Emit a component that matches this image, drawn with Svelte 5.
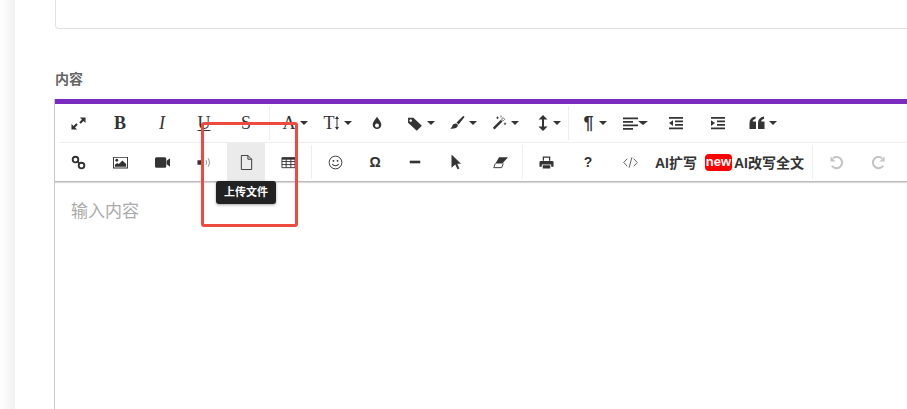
<script>
  const ic = {
    expand: '<path d="M9.500 1.500H15.500V7.500L13.300 5.300 10.400 8.200 8.800 6.600 11.700 3.700zM6.500 14.500H.5V8.500L2.700 10.700 5.600 7.800 7.200 9.400 4.300 12.300z"/>',
    link: '<g fill="none" stroke="currentColor" stroke-width="2"><circle cx="4.800" cy="4.800" r="3"/><circle cx="11.200" cy="11.200" r="3"/><path d="M7 7l2 2"/></g>',
    image: '<path fill-rule="evenodd" d="M0 2h16v12.400H0zM1 3v10.400h14V3z"/><circle cx="4" cy="5.600" r="1.500"/><path d="M2 12.400V10.500l2.500-2 1.700 1.200L10 5.800l4 3.800v2.800z"/>',
    video: '<path d="M1.600 2.500h8.800a1.600 1.600 0 0 1 1.600 1.600v7.800a1.600 1.600 0 0 1-1.600 1.600H1.600A1.600 1.600 0 0 1 0 11.900V4.100a1.600 1.600 0 0 1 1.600-1.600zM12.500 6.200 16 3.500v9l-3.500-2.700z"/>',
    sound: '<path d="M.5 5.500h3.500l3-1.500v8l-3-1.500H.5z"/><path fill="none" stroke="#777" stroke-width=".9" d="M9.500 5.500c1 1.400 1 3.600 0 5M11.800 3.500c1.900 2.500 1.900 6.500 0 9"/>',
    file: '<path fill="none" stroke="currentColor" stroke-width="1" d="M2.500.5h7l4 4v11h-11zM9.500.5v4h4"/>',
    table: '<path fill="none" stroke="currentColor" stroke-width="1" d="M1 3h14v10.500H1zM1 7h14M1 10.200h14M5.500 3v10.500M10.500 3v10.500"/><path d="M1 2.500h14V5H1z"/>',
    smile: '<circle cx="8" cy="8" r="6.800" fill="none" stroke="currentColor" stroke-width="1"/><circle cx="5.800" cy="6.200" r="1"/><circle cx="10.200" cy="6.200" r="1"/><path fill="none" stroke="currentColor" stroke-width="1.100" d="M4.600 9.600c1.600 2.600 5.200 2.600 6.800 0"/>',
    minus: '<rect x="2" y="6.500" width="12" height="3"/>',
    cursor: '<path d="M3.500.5 13 9.800H9.200l2.200 4.600-1.900.9-2.200-4.800-3.800 3.200z"/>',
    eraser: '<path d="M6.500 2.500H16L10 9H2.600z"/><path fill="none" stroke="currentColor" stroke-width="1" d="M2.500 9 .8 13.500h8.400L11 9"/>',
    print: '<path d="M4 1.500h8V6h-1.300V3H5.300v3H4zM1.800 6.500h12.400A1.300 1.300 0 0 1 15.500 7.800v4.700H13V10H3v2.500H.5V7.800A1.300 1.300 0 0 1 1.800 6.500zM4 11h8v3.500H4z"/>',
    code: '<path fill="none" stroke="#555" stroke-width="1" d="M4.500 4 .8 8l3.700 4M11.500 4l3.700 4-3.700 4M9.500 2.500l-3 11"/>',
    undo: '<path fill="none" stroke="currentColor" stroke-width="2.200" d="M4.200 3.400A6 6 0 1 1 3 11.500"/><path d="M1.500 1.500 7 7H1.500z"/>',
    redo: '<path fill="none" stroke="currentColor" stroke-width="2.200" d="M11.800 3.400A6 6 0 1 0 13 11.500"/><path d="M14.500 1.500 9 7h5.500z"/>',
    tag: '<path d="M1 2.500h5l8 7.500-4.800 4.800L1 7.200zM3.500 4a1.200 1.200 0 1 0 .01 0z" fill-rule="evenodd"/>',
    brush: '<path d="M15 1c.6.5.4 1.300-.2 2.100L9.600 9.400 7.500 7.500l5.900-5.800C14 1.100 14.600.7 15 1zM6.800 8.500c1.300 0 2.300 1 2 2.300-.4 2-2.600 3-6.300 3-.9 0-1.200-.6-.6-.9 1-.6 1.100-1.100 1.300-2 .3-1.300 1.800-2.400 3.600-2.400z"/>',
    wand: '<path d="m1.800 12.800 8-8 1.700 1.700-8 8z"/><path d="M10.500 4.100 12 2.600l1.700 1.700-1.500 1.500z" fill="#fff" stroke="currentColor" stroke-width=".7"/><path fill="none" stroke="currentColor" stroke-width=".8" d="M6.500 1.500v2.600M5.200 2.800h2.600M14 7.500v2.500M12.800 8.800h2.500M10 .5v1.800"/>',
    drop: '<path d="M8 1.500c.8 2.300 4.300 5 4.300 8.200a4.300 4.300 0 0 1-8.600 0C3.700 6.500 7.200 3.800 8 1.500z"/><path fill="#fff" d="M8 8.500a2 2 0 0 1 2 2 2 2 0 0 1-4 0 2 2 0 0 1 2-2z"/>',
    height: '<path d="M8 0 12.500 4.500H9v7h3.500L8 16l-4.500-4.500H7v-7H3.500z"/>',
    align: '<path d="M0 2.500h15v1.800H0zM0 6h10v1.800H0zM0 9.500h15v1.800H0zM0 13h10v1.800H0z"/>',
    outdent: '<path d="M1 2h14v1.700H1zM7 5.500h8v1.700H7zM7 9h8v1.700H7zM1 12.500h14v1.700H1zM5 5.200v5.800L1 8.100z"/>',
    indent: '<path d="M1 2h14v1.700H1zM7 5.500h8v1.700H7zM7 9h8v1.700H7zM1 12.500h14v1.700H1zM1 5.200v5.800L5 8.100z"/>',
    quote: '<path d="M.5 8c0-3.500 2-5.800 6-6.500v2.400C4.700 4.300 3.800 5 3.700 6.500h3.300v7.500H.5zM9 8c0-3.500 2-5.800 6-6.500v2.400c-1.800.4-2.700 1.100-2.800 2.600h3.300v7.500H9z"/>'
  };

  const row1 = [
    { x: 59, w: 38, icon: 'expand', s: 15 },
    { x: 101, w: 38, text: 'B', cls: 'b' },
    { x: 143, w: 38, text: 'I', cls: 'i' },
    { x: 185, w: 38, text: 'U', cls: 'u' },
    { x: 227, w: 38, text: 'S', cls: 's' },
    { x: 269, sep: true },
    { x: 283, w: 12, text: 'A', cls: 'a', caret: true },
    { x: 323, w: 16, text: 'T', cls: 't', caret: true, arrow: true },
    { x: 358, w: 38, icon: 'drop', s: 16 },
    { x: 408, w: 14, icon: 'tag', s: 17, caret: true },
    { x: 450, w: 14, icon: 'brush', s: 16, caret: true },
    { x: 492, w: 14, icon: 'wand', s: 16, caret: true },
    { x: 537, w: 11, icon: 'height', s: 16, caret: true },
    { x: 568, sep: true },
    { x: 583, w: 11, text: '¶', cls: 'p', caret: true },
    { x: 623, w: 15, icon: 'align', s: 16, caret: 'tight' },
    { x: 657, w: 38, icon: 'outdent', s: 16 },
    { x: 699, w: 38, icon: 'indent', s: 16 },
    { x: 749, w: 15, icon: 'quote', s: 16, caret: true }
  ];
  const row2 = [
    { x: 59, w: 38, icon: 'link', s: 15 },
    { x: 101, w: 38, icon: 'image', s: 15 },
    { x: 143, w: 38, icon: 'video', s: 15 },
    { x: 185, w: 38, icon: 'sound', s: 15 },
    { x: 227, w: 38, icon: 'file', s: 15, active: true },
    { x: 269, w: 38, icon: 'table', s: 15 },
    { x: 311, sep: true },
    { x: 316, w: 38, icon: 'smile', s: 15 },
    { x: 356, w: 38, text: 'Ω', cls: 'o' },
    { x: 396, w: 38, icon: 'minus', s: 14 },
    { x: 437, w: 38, icon: 'cursor', s: 16 },
    { x: 481, w: 38, icon: 'eraser', s: 15 },
    { x: 522, sep: true },
    { x: 527, w: 38, icon: 'print', s: 15 },
    { x: 569, w: 38, text: '?', cls: 'q' },
    { x: 611, w: 38, icon: 'code', s: 15 },
    { x: 655, w: 42, text: 'AI扩写', cls: 'ai' },
    { x: 705, badge: true, w: 27 },
    { x: 734, w: 70, text: 'AI改写全文', cls: 'ai' },
    { x: 812, sep: true },
    { x: 817, w: 38, icon: 'undo', s: 15, dim: true },
    { x: 859, w: 38, icon: 'redo', s: 15, dim: true }
  ];

  function place(items) {
    let end = 56;
    return items.map((it) => {
      const w = it.sep ? 1 : it.w + (it.caret === 'tight' ? 10 : it.caret ? 13 : 0);
      const m = it.x - end;
      end = it.x + w;
      return { ...it, m };
    });
  }
  const rows = [place(row1), place(row2)];
</script>

<div class="page">
  <div class="edge"></div>
  <main class="main">
    <div class="input"></div>
    <div class="label">内容</div>
    <section class="editor">
      <div class="toolbar">
        {#each rows as row}
          <div class="row">
            {#each row as it}
              {#if it.sep}
                <span class="sep" style="margin-left:{it.m}px"></span>
              {:else if it.badge}
                <span class="badge" style="margin-left:{it.m}px">new</span>
              {:else}
                <span class="btn" class:active={it.active} class:dim={it.dim} style="margin-left:{it.m}px">
                  <span class="face" style="width:{it.w}px">
                    {#if it.icon}
                      <svg class="glyph" width={it.s} height={it.s} viewBox="0 0 16 16" fill="currentColor">{@html ic[it.icon]}</svg>
                    {:else}
                      <span class={it.cls}>{it.text}</span>
                    {/if}
                    {#if it.arrow}
                      <svg class="glyph" width="4" height="14" viewBox="0 0 4 14" fill="currentColor"><path d="M2 0l2 3H2.500v8H4l-2 3-2-3h1.500V3H0z"/></svg>
                    {/if}
                  </span>
                  {#if it.caret}<span class="caret" class:tight={it.caret === 'tight'}></span>{/if}
                </span>
              {/if}
            {/each}
          </div>
        {/each}
      </div>
      <div class="content">输入内容</div>
    </section>
    <div class="tip">上传文件</div>
    <div class="mark"></div>
  </main>
</div>

<style>
  :global(body) { margin: 0; background: #fff; }
  .page {
    display: flex;
    width: 907px;
    height: 409px;
    overflow: hidden;
    font-family: "Liberation Sans", "Noto Sans CJK SC", sans-serif;
    color: #333;
  }
  .edge {
    flex: 0 0 15px;
    background: linear-gradient(to right, #fff, #f1f1f1);
  }
  .main {
    position: relative;
    flex: 1;
    min-width: 0;
    padding-left: 40px;
  }
  .input {
    box-sizing: border-box;
    width: 900px;
    height: 29px;
    border: 1px solid #e0e0e6;
    border-top: 0;
    border-radius: 0 0 4px 4px;
  }
  .label {
    margin-top: 41px;
    height: 29px;
    line-height: 18px;
    font-size: 14px;
    font-weight: 700;
    color: #666;
  }
  .editor {
    width: 900px;
    height: 310px;
    border-top: 5px solid #7b2cbf;
    box-shadow: -1px 0 0 #ccc;
  }
  .toolbar {
    border-bottom: 1px solid #bbb;
    box-shadow: 0 1px 1px rgba(0, 0, 0, .15);
  }
  .row {
    display: flex;
    align-items: center;
    height: 38px;
    padding-left: 1px;
  }
  .row:first-child {
    position: relative;
    height: 39px;
    align-items: flex-start;
  }
  .row:first-child::after {
    content: "";
    position: absolute;
    left: 4px;
    right: 0;
    bottom: 0;
    height: 1px;
    background: #eee;
  }
  .sep {
    flex: none;
    width: 1px;
    height: 34px;
    background: #eee;
  }
  .row:first-child .sep { margin-top: 2px; }
  .btn {
    flex: none;
    display: flex;
    align-items: center;
    height: 38px;
  }
  .btn.active { background: #ebebeb; }
  .btn.dim { color: #c4c4c4; }
  .glyph { flex: none; }
  .face {
    display: flex;
    align-items: center;
    justify-content: center;
    height: 100%;
    white-space: nowrap;
  }
  .caret {
    margin-left: 5px;
    border: 4px solid transparent;
    border-top: 4px solid #333;
    border-bottom: 0;
  }
  .caret.tight { margin-left: 0; border-width: 4px 5px 0; border-top-color: #333; }
  .b, .i, .u, .s, .a, .t {
    font-family: "Liberation Serif", serif;
    font-size: 18px;
    line-height: 18px;
  }
  .b { font-weight: 700; }
  .i { font-style: italic; }
  .u { text-decoration: underline; }
  .s { text-decoration: line-through; text-decoration-thickness: 1px; }
  .p { font-size: 18px; font-weight: 700; }
  .o { font-size: 14px; font-weight: 700; }
  .q { font-size: 14px; font-weight: 700; }
  .ai { font-size: 14px; font-weight: 700; }
  .badge {
    flex: none;
    width: 27px;
    height: 17px;
    line-height: 16px;
    text-align: center;
    border-radius: 4px;
    background: #f00;
    color: #fff;
    font-size: 13px;
    font-weight: 700;
  }
  .content {
    padding: 20px 16px;
    font-size: 17px;
    line-height: 20px;
    color: #aaa;
  }
  .tip {
    position: absolute;
    left: 201px;
    top: 181px;
    width: 60px;
    height: 23px;
    line-height: 23px;
    text-align: center;
    border-radius: 3px;
    background: #222;
    color: #fff;
    font-size: 11px;
    font-weight: 700;
    box-shadow: 0 1px 3px rgba(0, 0, 0, .35);
  }
  .mark {
    position: absolute;
    left: 186px;
    top: 122px;
    box-sizing: border-box;
    width: 97px;
    height: 105px;
    border: 3px solid #ee4b40;
    border-radius: 3px;
  }
</style>
